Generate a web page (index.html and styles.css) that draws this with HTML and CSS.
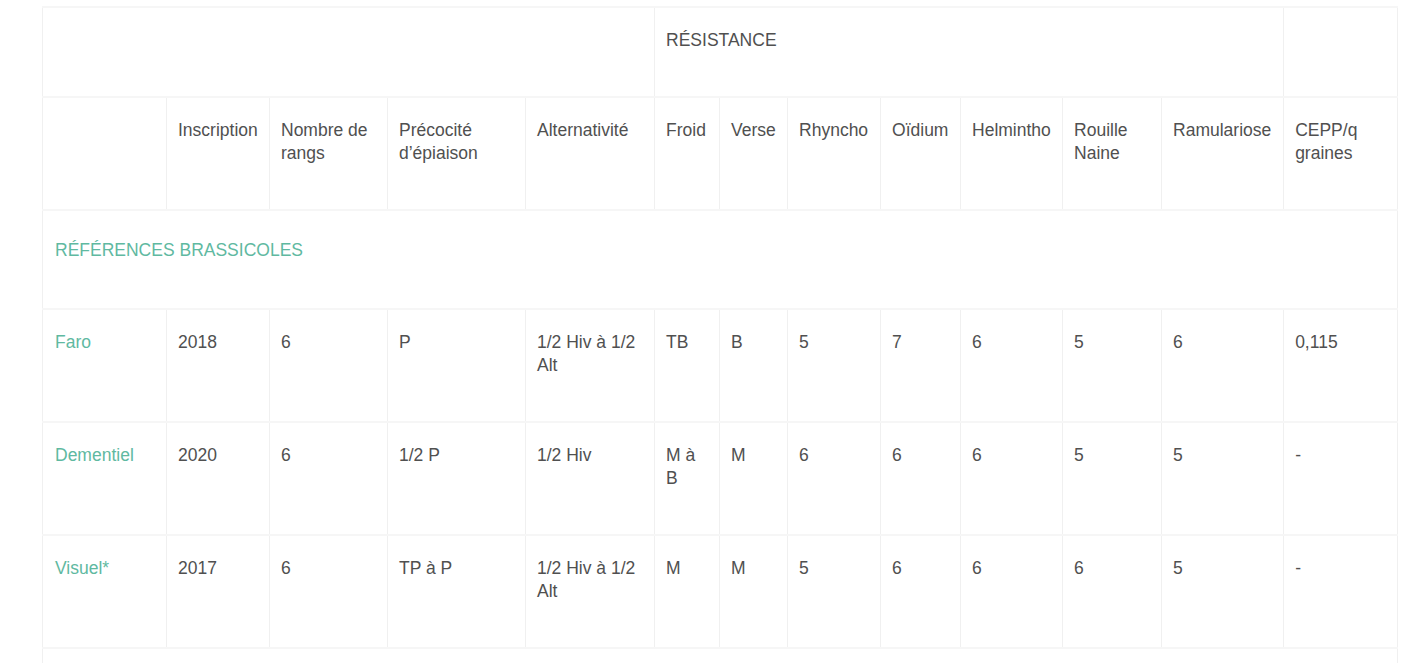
FILE: index.html
```html
<!DOCTYPE html>
<html lang="fr">
<head>
    <meta charset="UTF-8">
    <meta name="viewport" content="width=device-width, initial-scale=1.0">
    <title>Variétés d'orge</title>
    <link rel="stylesheet" href="styles.css">
</head>
<body>
    <table class="varieties">
        <colgroup>
            <col class="c-name">
            <col class="c-year">
            <col class="c-rows">
            <col class="c-early">
            <col class="c-alt">
            <col class="c-cold">
            <col class="c-verse">
            <col class="c-rhyn">
            <col class="c-oid">
            <col class="c-helm">
            <col class="c-rust">
            <col class="c-ramu">
            <col class="c-cepp">
        </colgroup>
        <thead>
            <tr>
                <th colspan="5"></th>
                <th colspan="7">RÉSISTANCE</th>
                <th></th>
            </tr>
            <tr>
                <th></th>
                <th>Inscription</th>
                <th>Nombre de rangs</th>
                <th>Précocité d’épiaison</th>
                <th>Alternativité</th>
                <th>Froid</th>
                <th>Verse</th>
                <th>Rhyncho</th>
                <th>Oïdium</th>
                <th>Helmintho</th>
                <th>Rouille Naine</th>
                <th>Ramulariose</th>
                <th>CEPP/q graines</th>
            </tr>
        </thead>
        <tbody>
            <tr class="section">
                <td colspan="13">RÉFÉRENCES BRASSICOLES</td>
            </tr>
            <tr>
                <td class="name">Faro</td>
                <td>2018</td>
                <td>6</td>
                <td>P</td>
                <td>1/2 Hiv à 1/2 Alt</td>
                <td>TB</td>
                <td>B</td>
                <td>5</td>
                <td>7</td>
                <td>6</td>
                <td>5</td>
                <td>6</td>
                <td>0,115</td>
            </tr>
            <tr>
                <td class="name">Dementiel</td>
                <td>2020</td>
                <td>6</td>
                <td>1/2 P</td>
                <td>1/2 Hiv</td>
                <td>M à B</td>
                <td>M</td>
                <td>6</td>
                <td>6</td>
                <td>6</td>
                <td>5</td>
                <td>5</td>
                <td>-</td>
            </tr>
            <tr>
                <td class="name">Visuel*</td>
                <td>2017</td>
                <td>6</td>
                <td>TP à P</td>
                <td>1/2 Hiv à 1/2 Alt</td>
                <td>M</td>
                <td>M</td>
                <td>5</td>
                <td>6</td>
                <td>6</td>
                <td>6</td>
                <td>5</td>
                <td>-</td>
            </tr>
            <tr class="section">
                <td colspan="13"></td>
            </tr>
        </tbody>
    </table>
</body>
</html>
```

FILE: styles.css
```css
body {
    margin: 6px 0 0 42px;
    background: #fff;
    font-family: 'Liberation Sans', Arial, sans-serif;
    color: #505050;
}
.varieties {
    width: 1355px;
    table-layout: fixed;
    border-collapse: collapse;
    font-size: 17.5px;
    line-height: 23px;
}
.c-name { width: 124px; }
.c-year { width: 103px; }
.c-rows { width: 118px; }
.c-early { width: 138px; }
.c-alt { width: 129px; }
.c-cold { width: 65px; }
.c-verse { width: 68px; }
.c-rhyn { width: 93px; }
.c-oid { width: 80px; }
.c-helm { width: 102px; }
.c-rust { width: 99px; }
.c-ramu { width: 122px; }
.c-cepp { width: 114px; }
.varieties th,
.varieties td {
    text-align: left;
    vertical-align: top;
    font-weight: normal;
    padding: 21px 11px 44px;
    border-top: 2px solid #f6f6f6;
    border-bottom: 2px solid #f6f6f6;
    border-left: 1px solid #f0f0f0;
    border-right: 1px solid #f0f0f0;
}
.varieties .section td {
    padding: 28px 11px 46px 12px;
    color: #5fb9a1;
}
.varieties td.name {
    padding-left: 12px;
    color: #5fb9a1;
}
```
